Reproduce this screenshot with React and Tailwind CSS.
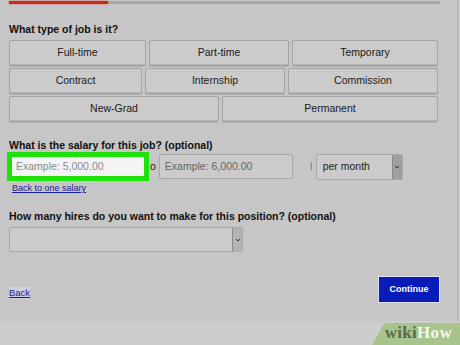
import React from "react";

const Btn = ({ children, className = "" }) => (
  <div
    className={`flex items-center justify-center h-[26px] bg-[#cbcbcb] border border-[#a3a3a3] rounded-[2px] shadow-[inset_0_-1px_0_#b5b5b5,0_1px_0_#b0b0b0] text-[10.5px] text-[#1a1a1a] ${className}`}
  >
    {children}
  </div>
);

export default function App() {
  return (
    <div
      className="w-[460px] h-[345px] bg-[#c6c6c6] relative overflow-hidden flex flex-col"
      style={{ fontFamily: '"Liberation Sans", Arial, sans-serif' }}
    >
      <div className="h-[321px] relative border-r border-[#b4b4b4] w-[458px] flex flex-col pl-[9px]">
        {/* progress */}
        <div className="mt-[1px] w-[431px] h-[3px] bg-[#a8a8a8] flex">
          <div className="w-[99px] h-full bg-[#c92a1e] shadow-[0_0_2px_#e05040]" />
        </div>

        <div className="mt-[19px] text-[10.5px] font-bold text-[#111] leading-[12px]">What type of job is it?</div>

        <div className="mt-[5px] w-[429px] flex flex-col gap-[2px]">
          <div className="flex gap-[3px]">
            <Btn className="w-[137px]">Full-time</Btn>
            <Btn className="w-[140px]">Part-time</Btn>
            <Btn className="flex-1">Temporary</Btn>
          </div>
          <div className="flex gap-[3px]">
            <Btn className="w-[133px]">Contract</Btn>
            <Btn className="w-[140px]">Internship</Btn>
            <Btn className="flex-1">Commission</Btn>
          </div>
          <div className="flex gap-[3px]">
            <Btn className="w-[210px]">New-Grad</Btn>
            <Btn className="flex-1">Permanent</Btn>
          </div>
        </div>

        <div className="mt-[17px] text-[10.5px] font-bold text-[#111] leading-[12px]">
          What is the salary for this job? (optional)
        </div>

        <div className="mt-[1px] ml-[-2px] flex items-center">
          <div className="w-[142px] h-[29px] bg-[#1ee10a] p-[5px]">
            <div className="w-full h-full bg-[#f4f4f4] flex items-center pl-[4px] text-[10.5px] text-[#8a8a8a]">
              Example: 5,000.00
            </div>
          </div>
          <span className="ml-[1px] text-[10.5px] text-[#222]">o</span>
          <div className="ml-[3px] w-[134px] h-[25px] bg-[#cbcbcb] border border-[#a8a8a8] rounded-[2px] flex items-center pl-[5px] text-[10.5px] text-[#666]">
            Example: 6,000.00
          </div>
          <span className="ml-[17px] text-[10px] text-[#777]">I</span>
          <div className="ml-[3px] w-[87px] h-[26px] bg-[#cbcbcb] border border-[#a8a8a8] rounded-[2px] flex items-stretch">
            <div className="flex-1 flex items-center pl-[6px] text-[10.5px] text-[#222]">per month</div>
            <div className="w-[10px] bg-[#9f9f9f] border-l border-[#8a8a8a] flex items-center justify-center">
              <svg width="6" height="4" viewBox="0 0 6 4"><path d="M1 1l2 2 2-2" stroke="#333" strokeWidth="1" fill="none" /></svg>
            </div>
          </div>
        </div>

        <div className="mt-[1px] ml-[3px] text-[9px] text-[#1a2190] underline leading-[12px]">Back to one salary</div>

        <div className="mt-[16px] text-[10.5px] font-bold text-[#111] leading-[12px]">
          How many hires do you want to make for this position? (optional)
        </div>

        <div className="mt-[5px] w-[234px] h-[25px] bg-[#cbcbcb] border border-[#a8a8a8] rounded-[2px] flex items-stretch">
          <div className="flex-1" />
          <div className="w-[10px] bg-[#b3b3b3] border-l border-[#8a8a8a] flex items-center justify-center">
            <svg width="6" height="4" viewBox="0 0 6 4"><path d="M1 1l2 2 2-2" stroke="#333" strokeWidth="1" fill="none" /></svg>
          </div>
        </div>

        <div className="mt-[24px] flex items-start justify-between w-[431px]">
          <span className="mt-[11px] text-[9.5px] text-[#1c1a80] underline bg-[#cfcfe6] leading-[12px]">Back</span>
          <div className="w-[62px] h-[27px] bg-[#0a1cb8] border border-[#e0e0f0] flex items-center justify-center text-[9px] font-bold text-white">
            Continue
          </div>
        </div>
      </div>

      <div className="h-[24px] bg-[#cdcdcd] relative">
        <div
          className="absolute right-0 bottom-0 w-[88px] h-[22px] bg-[#a8c38c]"
          style={{ clipPath: "polygon(14% 0, 100% 0, 100% 100%, 0 100%)" }}
        />
        <div
          className="absolute right-[8px] bottom-[3px] text-[17px] font-bold leading-[18px] tracking-[0.3px]"
          style={{ fontFamily: '"Liberation Serif", "DejaVu Serif", serif' }}
        >
          <span className="text-[#5b6b50]">wiki</span>
          <span className="text-[#f2f6ee]">How</span>
        </div>
      </div>
    </div>
  );
}
